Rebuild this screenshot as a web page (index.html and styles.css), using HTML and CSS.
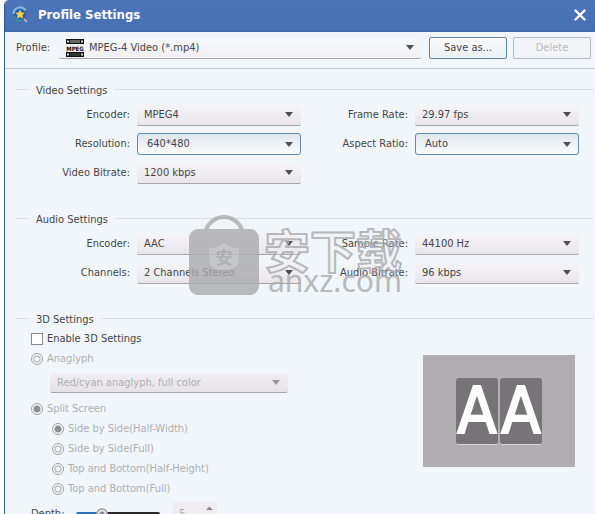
FILE: index.html
```
<!DOCTYPE html>
<html lang="en">
<head>
	<meta charset="utf-8">
	<title>Profile Settings</title>
	<link rel="stylesheet" href="styles.css">
</head>
<body>
	<div class="window">
		<header class="titlebar">
			<svg class="logo" width="18" height="18" viewBox="0 0 18 18">
				<circle cx="8" cy="8" r="7" fill="#2b62a8"/>
				<path d="M1.500 8a6.500 6.500 0 0 1 12-3.500" fill="none" stroke="#7db8e0" stroke-width="2"/>
				<path d="M14 5a6.500 6.500 0 0 1-1 8" fill="none" stroke="#6a62a6" stroke-width="2"/>
				<path d="M2 10a6.500 6.500 0 0 0 8 4.500" fill="none" stroke="#3f8b9d" stroke-width="2"/>
				<path d="M8 3.500l1.500 3 3.300.3-2.400 2.300.8 3.400L8 10.900l-3 1.600.7-3.400L3.300 6.800l3.300-.3z" fill="#f6d047"/>
				<path d="M12 13l3 3" stroke="#b7a9b5" stroke-width="2"/>
			</svg>
			<h1>Profile Settings</h1>
			<button class="close" type="button" aria-label="Close">
				<svg width="12" height="12" viewBox="0 0 12 12"><path d="M1.500 1.500l9 9M10.500 1.500l-9 9" stroke="#fff" stroke-width="2.400" stroke-linecap="round"/></svg>
			</button>
		</header>

		<div class="toolbar">
			<label for="profile">Profile:</label>
			<div class="profile">
				<svg class="film" width="18" height="18" viewBox="0 0 18 18">
					<rect width="18" height="18" fill="#111"/>
					<rect y="5" width="18" height="8" fill="#eee"/>
					<rect x="4" y="1" width="10" height="3" fill="#666"/>
					<rect x="4" y="14" width="10" height="3" fill="#333"/>
					<path d="M1 2.500h2M15 2.500h2M1 15.500h2M15 15.500h2" stroke="#ddd" stroke-width="2"/>
					<text x="9" y="12" text-anchor="middle" class="film-text">MPEG</text>
				</svg>
				<select id="profile"><option>MPEG-4 Video (*.mp4)</option></select>
			</div>
			<button class="btn" type="button">Save as...</button>
			<button class="btn" type="button" disabled>Delete</button>
		</div>

		<main>
			<fieldset>
				<legend>Video Settings</legend>
				<div class="grid">
					<label for="v-encoder">Encoder:</label>
					<select id="v-encoder"><option>MPEG4</option></select>
					<label for="fps">Frame Rate:</label>
					<select id="fps"><option>29.97 fps</option></select>
					<label for="resolution">Resolution:</label>
					<select id="resolution" class="boxed"><option>640*480</option></select>
					<label for="aspect">Aspect Ratio:</label>
					<select id="aspect" class="boxed"><option>Auto</option></select>
					<label for="v-bitrate">Video Bitrate:</label>
					<select id="v-bitrate"><option>1200 kbps</option></select>
				</div>
			</fieldset>

			<fieldset>
				<legend>Audio Settings</legend>
				<div class="grid">
					<label for="a-encoder">Encoder:</label>
					<select id="a-encoder"><option>AAC</option></select>
					<label for="rate">Sample Rate:</label>
					<select id="rate"><option>44100 Hz</option></select>
					<label for="channels">Channels:</label>
					<select id="channels"><option>2 Channels Stereo</option></select>
					<label for="a-bitrate">Audio Bitrate:</label>
					<select id="a-bitrate"><option>96 kbps</option></select>
				</div>
				<svg class="watermark" width="220" height="90" viewBox="0 0 220 90">
					<g opacity=".8">
						<path d="M17 16a19 19 0 0 1 36 0" fill="none" stroke="#aaaaac" stroke-width="4"/>
						<rect y="15" width="70" height="66" rx="9" fill="#aaaaac"/>
						<path d="M35 29c5 4 10 5 15 5v12c0 6-5 9-15 11-10-2-15-5-15-11V34c5 0 10-1 15-5z" fill="#bcbcbe"/>
						<text x="35" y="50" text-anchor="middle" class="wm-seal">安</text>
						<text x="75" y="54" class="wm-name">安下载</text>
						<text x="79" y="78" class="wm-site">anxz.com</text>
					</g>
				</svg>
			</fieldset>

			<fieldset>
				<legend>3D Settings</legend>
				<div class="three-d">
					<div class="options">
						<label class="row"><input type="checkbox">Enable 3D Settings</label>
						<label class="row off"><input type="radio" name="mode" disabled>Anaglyph</label>
						<select class="anaglyph" aria-label="Anaglyph type" disabled><option>Red/cyan anaglyph, full color</option></select>
						<label class="row off"><input type="radio" name="mode" checked disabled>Split Screen</label>
						<div class="sub">
							<label class="row off"><input type="radio" name="split" checked disabled>Side by Side(Half-Width)</label>
							<label class="row off"><input type="radio" name="split" disabled>Side by Side(Full)</label>
							<label class="row off"><input type="radio" name="split" disabled>Top and Bottom(Half-Height)</label>
							<label class="row off"><input type="radio" name="split" disabled>Top and Bottom(Full)</label>
						</div>
						<div class="depth">
							<label for="depth">Depth:</label>
							<input id="depth" type="range" min="0" max="18" value="5">
							<div class="spin">
								<input type="text" value="5" aria-label="Depth value" disabled>
								<svg width="7" height="16" viewBox="0 0 7 16"><path d="M0 4l3.500-3.500L7 4zM0 12l3.500 3.500L7 12z" fill="#888"/></svg>
							</div>
						</div>
					</div>
					<div class="preview">
						<span class="tile">A</span>
						<span class="tile">A</span>
					</div>
				</div>
			</fieldset>
		</main>
	</div>
</body>
</html>
```
FILE: styles.css
```
* {
	box-sizing: border-box;
}
body {
	margin: 0;
	height: 100vh;
	overflow: hidden;
	background: #fff;
	color: #454549;
	font: 11px/16px "DejaVu Sans Condensed", "Noto Sans", sans-serif;
}
button,
input,
select {
	margin: 0;
	font: inherit;
	color: inherit;
}
.window {
	margin-left: 4px;
	height: 100vh;
	border-left: 1px solid #2f5c92;
	border-top-left-radius: 5px;
	background: #f0f6fa;
	overflow: hidden;
}

/* title bar */
.titlebar {
	display: flex;
	align-items: center;
	gap: 8px;
	height: 32px;
	padding: 0 8px 2px 7px;
	background: linear-gradient(#4c76b9, #4670b4);
	border-bottom: 1px solid #3d69aa;
}
.titlebar h1 {
	flex: 1;
	margin: 0;
	color: #fff;
	font-size: 13px;
	font-weight: bold;
}
.close {
	display: flex;
	padding: 1px;
	border: 0;
	background: none;
}

/* profile row */
.toolbar {
	display: flex;
	align-items: center;
	gap: 6px;
	height: 37px;
	padding: 0 4px 4px 11px;
	border-bottom: 1px solid #b9cddc;
}
.toolbar label {
	width: 37px;
}
.profile {
	position: relative;
	flex: 1;
	margin: 0 2px 0 0;
}
.film {
	position: absolute;
	left: 7px;
	top: 1px;
}
.film-text {
	font: bold 6px "DejaVu Sans Condensed", sans-serif;
	fill: #111;
}
.profile select {
	width: 100%;
	padding-left: 30px;
}
.btn {
	width: 78px;
	height: 22px;
	padding: 0;
	border: 1px solid #62839f;
	border-radius: 2px;
	background: linear-gradient(#fbfbfd, #ebeff3);
}
.btn:disabled {
	border-color: #a9bccb;
	background: #f3f5f8;
	color: #b9bbbe;
}

select {
	appearance: none;
	height: 21px;
	padding: 0 20px 0 7px;
	border: 0;
	border-bottom: 1px solid #a9a6aa;
	border-radius: 2px;
	background:
		url("data:image/svg+xml,%3Csvg xmlns='http://www.w3.org/2000/svg' width='8' height='5'%3E%3Cpath d='M0 0h8L4 5z' fill='%23505054'/%3E%3C/svg%3E") no-repeat right 8px center,
		linear-gradient(#f5f4f7, #e9e6ea);
}
.profile select {
	background:
		url("data:image/svg+xml,%3Csvg xmlns='http://www.w3.org/2000/svg' width='8' height='5'%3E%3Cpath d='M0 0h8L4 5z' fill='%23505054'/%3E%3C/svg%3E") no-repeat right 7px center,
		linear-gradient(#f7f8fb, #f1f1f4);
}
select.boxed {
	height: 22px;
	padding-left: 9px;
	border: 1px solid #5f8bac;
	border-radius: 3px;
	background:
		url("data:image/svg+xml,%3Csvg xmlns='http://www.w3.org/2000/svg' width='8' height='5'%3E%3Cpath d='M0 0h8L4 5z' fill='%23505054'/%3E%3C/svg%3E") no-repeat right 7px center,
		linear-gradient(#dfe7ee, #fafcfd);
}
select:disabled {
	opacity: 1;
	color: #b0aeb2;
	background:
		url("data:image/svg+xml,%3Csvg xmlns='http://www.w3.org/2000/svg' width='8' height='5'%3E%3Cpath d='M0 0h8L4 5z' fill='%23969599'/%3E%3C/svg%3E") no-repeat right 8px center,
		linear-gradient(#f1eff3, #e6e3e8);
}

/* groups */
main {
	padding: 11px 2px 0 10px;
}
fieldset {
	position: relative;
	min-width: 0;
	margin: 0 0 25px;
	padding: 5px 14px 0 0;
	border: 0;
	border-top: 1px solid #d8dfe6;
}
legend {
	margin-left: 14px;
	padding: 3px 7px 0;
}
.grid {
	display: grid;
	grid-template-columns: 115px 1fr 100px 1fr;
	grid-auto-rows: 22px;
	gap: 7px;
	align-items: center;
}
.grid label {
	text-align: right;
}
.watermark {
	position: absolute;
	left: 174px;
	top: -14px;
	pointer-events: none;
}
.wm-seal {
	font: bold 17px "Noto Sans CJK SC", sans-serif;
	fill: #a0a0a2;
}
.wm-name {
	font: bold 46px "Noto Sans CJK SC", sans-serif;
	fill: #f0f2f5;
	fill-opacity: .4;
	stroke: #aaaaac;
	stroke-width: 2;
	stroke-linejoin: round;
}
.wm-site {
	font: 30px "Noto Sans", sans-serif;
	fill: #aaaaac;
}

/* 3D */
.three-d {
	display: flex;
	justify-content: space-between;
	align-items: flex-start;
	margin-top: -4px;
}
.options {
	padding-left: 16px;
}
.row {
	display: flex;
	align-items: center;
	gap: 4px;
	height: 20px;
}
.off {
	color: #aeb0b3;
}
.sub {
	padding-left: 21px;
}
input[type="checkbox"],
input[type="radio"] {
	appearance: none;
	width: 12px;
	height: 12px;
	border: 1px solid #8b8b8f;
	background: #fff;
}
input[type="radio"] {
	border-color: #a3a3a6;
	border-radius: 50%;
	background: radial-gradient(#fff 2px, #a8a8ab 3px, #a8a8ab 3px, #f4f6f8 4px);
}
input[type="radio"]:checked {
	background: radial-gradient(#8f8f92 3px, #f4f6f8 4px);
}
.anaglyph {
	display: block;
	width: 238px;
	height: 20px;
	margin: 4px 0 6px 19px;
}
.depth {
	display: flex;
	align-items: center;
	height: 30px;
}
.depth label {
	width: 45px;
}
.depth input[type="range"] {
	appearance: none;
	width: 84px;
	height: 4px;
	margin-right: 13px;
	border-radius: 2px;
	background: linear-gradient(90deg, #2a72b8 24px, #28262a 24px);
}
.depth input[type="range"]::-webkit-slider-thumb {
	appearance: none;
	width: 12px;
	height: 12px;
	border: 2px solid #aaaaad;
	border-radius: 50%;
	background: radial-gradient(#8b8b8e 2px, #eee 3px);
}
.spin {
	display: flex;
	align-items: center;
	width: 44px;
	height: 24px;
	padding: 0 4px 0 6px;
	background: #efedf1;
}
.spin input {
	flex: 1;
	min-width: 0;
	padding: 0;
	border: 0;
	background: none;
	color: #b0aeb2;
}
.preview {
	display: flex;
	justify-content: center;
	align-items: center;
	gap: 2px;
	width: 152px;
	height: 112px;
	margin: 26px 4px 0 0;
	background: #b0aeb1;
}
.tile {
	width: 42px;
	height: 67px;
	border-bottom: 1px solid #d6d5d7;
	border-radius: 3px;
	background: #767477;
	color: #fff;
	font: 64px/67px "DejaVu Sans Condensed", sans-serif;
	text-align: center;
	-webkit-text-stroke: 2px #fff;
}
```
